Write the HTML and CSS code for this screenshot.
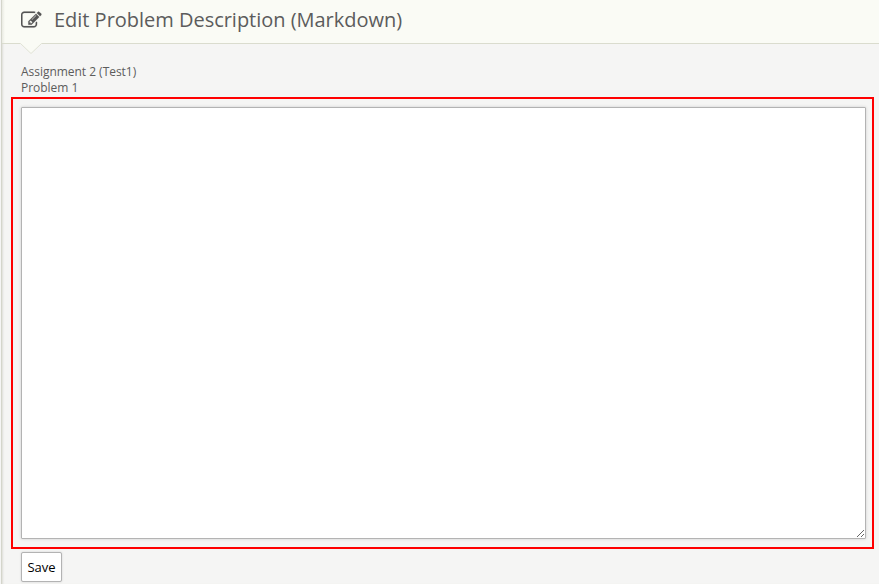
FILE: index.html
```html
<!DOCTYPE html>
<html lang="en">
<head>
<meta charset="utf-8">
<title>Edit Problem Description</title>
<link rel="stylesheet" href="styles.css">
</head>
<body>
<div class="page">
  <header class="titlebar">
    <svg class="icon" viewBox="0 0 1792 1792" aria-hidden="true"><path d="M888 1184l116-116-152-152-116 116v56h96v96h56zm440-720q-16-16-33 1l-350 350q-17 17-1 33t33-1l350-350q17-17 1-33zm80 594v190q0 119-84.500 203.500t-203.500 84.500h-832q-119 0-203.500-84.500t-84.500-203.500v-832q0-119 84.500-203.500t203.500-84.500h832q63 0 117 25 15 7 18 23 3 17-9 29l-49 49q-14 14-32 8-23-6-45-6h-832q-66 0-113 47t-47 113v832q0 66 47 113t113 47h832q66 0 113-47t47-113v-126q0-13 9-22l64-64q15-15 35-7t20 29zm-96-738l288 288-672 672h-288v-288zm444 132l-92 92-288-288 92-92q28-28 68-28t68 28l152 152q28 28 28 68t-28 68z"/></svg>
    <h1>Edit Problem Description (Markdown)</h1>
    <svg class="notch" viewBox="0 0 22 11" aria-hidden="true"><path class="notch-fill" d="M0 0H22L11 10.500Z"/><path class="notch-line" d="M.5 .5L11 10.500L21.500 .5"/></svg>
  </header>
  <main>
    <p class="info">Assignment 2 (Test1)<br>Problem 1</p>
    <div class="frame"><textarea aria-label="Description"></textarea></div>
    <button class="save">Save</button>
  </main>
</div>
</body>
</html>
```
FILE: styles.css
```css
* { box-sizing: border-box; }
body { margin: 0; height: 584px; overflow: hidden; background: #f5f5f4; color: #5c5c5c; font-family: "Open Sans", sans-serif; }
.page { height: 584px; margin-left: 1px; border-left: 1px solid #d4d5cb; box-shadow: inset 2px 0 2px -1px #deded8; }
.titlebar { position: relative; display: flex; height: 44px; padding-left: 19px; background: linear-gradient(to right, #e9eae2, #fafbf5 3px); border-bottom: 1px solid #dadcce; }
.icon { width: 20.500px; height: 20.500px; margin-top: 9.500px; fill: #555; stroke: #555; stroke-width: 14; }
h1 { margin: 6px 0 0 12.500px; font-size: 20px; line-height: 27px; font-weight: 400; letter-spacing: -.02px; white-space: nowrap; }
.notch { position: absolute; left: 18px; top: 43px; width: 22px; height: 11px; }
.notch-fill { fill: #fafbf5; }
.notch-line { fill: none; stroke: #e0e2d5; }
main { padding-left: 9px; }
.info { margin: 20px 0 1px 10px; font-size: 12px; line-height: 16px; letter-spacing: -.03px; }
.frame { width: 863px; height: 452px; padding: 8px 7px 8px 8px; border: 2px solid #f00; }
textarea { display: block; width: 845px; height: 432px; background: #fff; border: 1px solid #b3b3b3; border-radius: 1px; box-shadow: 0 0 3px #ccc; outline: 0; }
.save { display: block; width: 41px; height: 30px; margin: 3px 0 0 10px; padding: 0; border: 1px solid #b3b3b3; border-radius: 2px; box-shadow: 0 0 2px #ccc; background: #fff; color: #000; font: 13px "Open Sans", sans-serif; }
```
